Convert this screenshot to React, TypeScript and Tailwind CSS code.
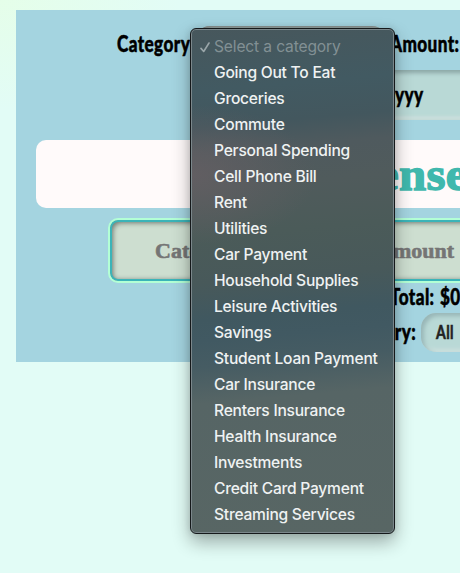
const categories = [
  "Going Out To Eat",
  "Groceries",
  "Commute",
  "Personal Spending",
  "Cell Phone Bill",
  "Rent",
  "Utilities",
  "Car Payment",
  "Household Supplies",
  "Leisure Activities",
  "Savings",
  "Student Loan Payment",
  "Car Insurance",
  "Renters Insurance",
  "Health Insurance",
  "Investments",
  "Credit Card Payment",
  "Streaming Services",
];

// Narrow marker-style lettering used by the form labels.
function Hand({ text, className = "" }: { text: string; className?: string }) {
  return (
    <span className={"shrink-0 whitespace-nowrap font-[Lato,sans-serif] text-[22px] font-black leading-9 " + className}>
      <span className="inline-block origin-left scale-x-[0.78] tracking-[0.5px] [-webkit-text-stroke:0.5px_currentColor]">{text}</span>
    </span>
  );
}

function Menu() {
  return (
    <div className="absolute left-[190px] top-7 h-[506px] w-[205px] rounded-md border border-[#15191b] bg-[linear-gradient(175deg,#47575c_0%,#425a62_12%,#43575e_19%,#4f5a5e_24%,#505b5c_31%,#4b5b59_40%,#48595a_49%,#405860_56%,#415962_60%,#465c63_65%,#566565_72%,#586664_100%)] py-[5px] font-[Inter,sans-serif] text-[15.6px] tracking-[-0.24px] shadow-[inset_0_0_0_1px_#7b878b,0_8px_18px_rgba(0,0,0,0.32),0_0_7px_rgba(0,0,0,0.12)]">
      <div className="pointer-events-none absolute inset-px rounded-[5px] bg-[radial-gradient(ellipse_125px_70px_at_0px_145px,#665f63cc,transparent)]" />
      <ul className="relative whitespace-nowrap">
        <li className="flex h-[26px] items-center pl-[9px] tracking-[-0.15px] text-[#829094]">
          <svg width="11" height="12" viewBox="0 0 11 12" className="mr-[3px] shrink-0" fill="none" stroke="#9aa6a9" strokeWidth="1.6" strokeLinecap="round" strokeLinejoin="round"><path d="M1 7.4 3.7 10.5 9 2" /></svg>
          Select a category
        </li>
        {categories.map((name) => (
          <li key={name} className="flex h-[26px] items-center pl-[23px] font-medium text-[#eff2f2]">
            {name}
          </li>
        ))}
      </ul>
    </div>
  );
}

export default function App() {
  return (
    <div className="relative h-[573px] w-[460px] overflow-hidden bg-[#e2fcf6] bg-[radial-gradient(ellipse_180px_110px_at_0_0,#e5fee9,transparent)] pl-4 pt-2.5">
      <main className="h-[352px] w-[560px] bg-[#a4d4e0] text-black">
        <div className="flex h-[60px] pl-[101px] pt-4">
          <Hand text="Category" className="w-[73px]" />
          <div className="ml-1 h-9 w-[194px] rounded-2xl bg-[#bad9d5] shadow-[inset_2px_2px_5px_#777]" />
          <Hand text="Amount:" className="ml-[2px]" />
        </div>
        <div className="flex h-[50px] items-center">
          <div className="ml-[220px] flex h-full w-[340px] items-center bg-[#b9d9d6] pl-[159px] shadow-[inset_0_3px_4px_#8ba6a5,inset_0_-4px_3px_#c9dedb]">
            <Hand text="yyy" />
          </div>
        </div>
        <h1 className="ml-5 mt-5 flex h-[68px] items-center rounded-[10px] bg-[#fffafa] pl-[341px] font-['Liberation_Serif',serif] text-[47px] font-bold tracking-[0.3px] text-[#40b8ad] [-webkit-text-stroke:1.4px_#40b8ad]">
          <span className="inline-block origin-left scale-x-[1.04]">enses</span>
        </h1>
        <div className="ml-[92px] mt-2.5 flex h-[65px] items-center rounded-[10px] border-2 border-[#b3ffd5] bg-[#cdded0] pl-[45px] font-['Liberation_Serif',serif] text-[22px] font-bold text-[#757575] shadow-[inset_0_0_0_2px_#3bb4b8,inset_3px_3px_5px_#707a72,inset_-2px_-2px_4px_#8d9990] [-webkit-text-stroke:0.6px_#757575]">
          <span className="w-[222px]">Category</span>
          <span>Amount</span>
        </div>
        <div className="flex h-[27px] pl-[374px]">
          <Hand text="Total:" className="-mt-1 w-[50px]" />
          <Hand text="$0.00" className="-mt-1" />
        </div>
        <div className="flex pl-[322px] pt-1">
          <Hand text="Category:" className="w-[78px]" />
          <div className="-mt-px ml-[5px] flex h-[39px] w-24 items-center rounded-[15px] bg-[#b9d9d6] pl-[15px] font-[Lato,sans-serif] text-[18px] font-bold text-[#222] shadow-[inset_3px_3px_4px_#98b6b7,inset_-3px_-3px_4px_#cce0de]">
            <span className="inline-block origin-left scale-x-[0.78] tracking-[0.5px] [-webkit-text-stroke:0.6px_#222]">All</span>
          </div>
        </div>
      </main>
      <Menu />
    </div>
  );
}
